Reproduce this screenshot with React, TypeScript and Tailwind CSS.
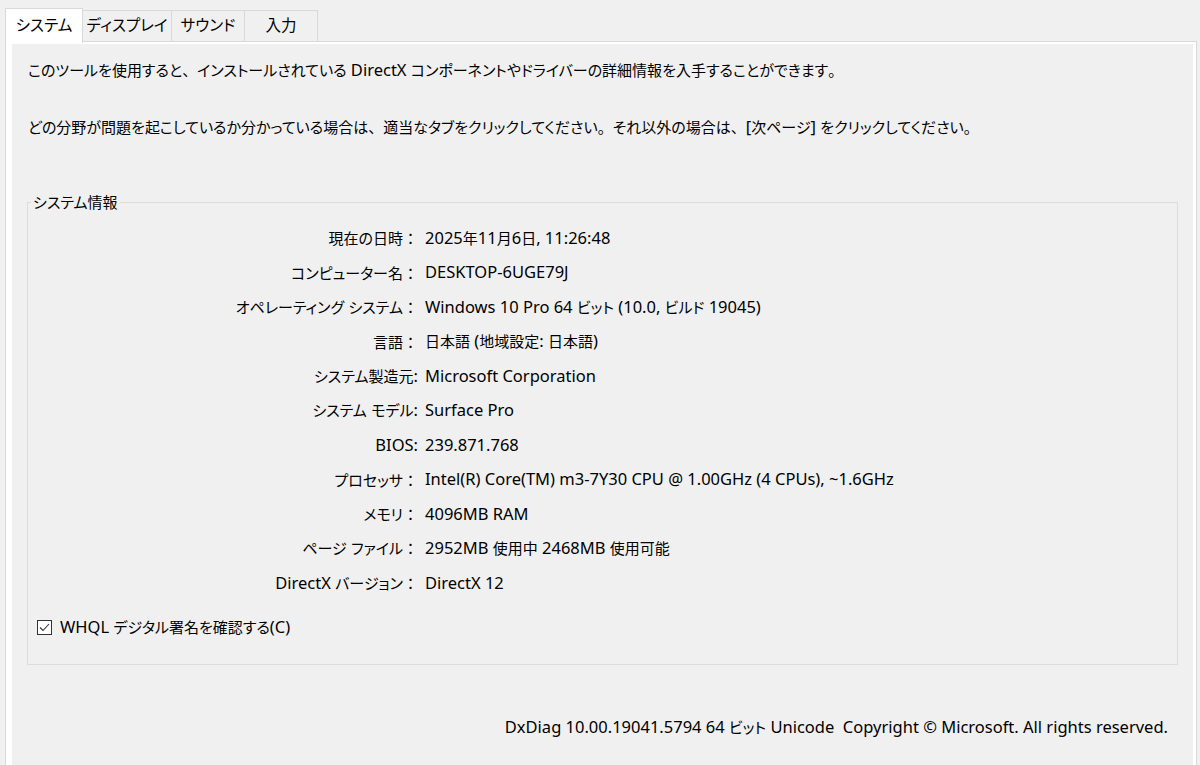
import React from "react";

const rows: [string, string][] = [
  ["現在の日時：", "2025年11月6日, 11:26:48"],
  ["コンピューター名：", "DESKTOP-6UGE79J"],
  ["オペレーティング システム：", "Windows 10 Pro 64 ビット (10.0, ビルド 19045)"],
  ["言語：", "日本語 (地域設定: 日本語)"],
  ["システム製造元:", "Microsoft Corporation"],
  ["システム モデル:", "Surface Pro"],
  ["BIOS:", "239.871.768"],
  ["プロセッサ：", "Intel(R) Core(TM) m3-7Y30 CPU @ 1.00GHz (4 CPUs), ~1.6GHz"],
  ["メモリ：", "4096MB RAM"],
  ["ページ ファイル：", "2952MB 使用中 2468MB 使用可能"],
  ["DirectX バージョン：", "DirectX 12"],
];

const tabs = ["ディスプレイ", "サウンド", "入力"];
const tabWidths = ["w-[89px]", "w-[73px]", "w-[73px]"];

// Latin runs are set a little larger than the kana, full-width punctuation keeps its box
function T({ s }: { s: string }) {
  const parts = s.split(/([\x20-\x7E©]+|[、。：])/).filter(Boolean);
  return (
    <>
      {parts.map((p, i) =>
        /^[\x20-\x7E©]+$/.test(p) ? (
          <span key={i} className="text-[16.5px]">
            {p}
          </span>
        ) : /^[、。：]$/.test(p) ? (
          <span key={i} className="[font-feature-settings:normal]">
            {p}
          </span>
        ) : (
          <React.Fragment key={i}>{p}</React.Fragment>
        ),
      )}
    </>
  );
}

export default function App() {
  return (
    <div className="w-[1200px] h-[765px] overflow-hidden bg-[#f0f0f0] text-[15px] text-black font-['Noto_Sans','Noto_Sans_CJK_JP',sans-serif] [font-feature-settings:'palt']">
      {/* tab strip */}
      <div className="flex items-end pl-[5px] h-[42px] whitespace-nowrap text-[15.5px]">
        <div className="relative z-10 w-[78px] h-[35px] -mb-px bg-white border border-b-0 border-[#d9d9d9] flex items-center justify-center">
          システム
        </div>
        {tabs.map((t, i) => (
          <div
            key={t}
            className={`${tabWidths[i]} h-[31px] mb-px border-t border-r border-[#d9d9d9] flex items-center justify-center`}
          >
            {t}
          </div>
        ))}
      </div>

      {/* panel */}
      <div className="ml-[5px] w-[1192px] h-[730px] -mt-px border border-[#d9d9d9] bg-white pl-[6px] pr-[3px] pt-[2px]">
        <div className="h-full bg-[#f0f0f0] pt-[15px]">
          <p className="pl-[16px] leading-[22px] whitespace-nowrap">
            <T s="このツールを使用すると、インストールされている DirectX コンポーネントやドライバーの詳細情報を入手することができます。" />
          </p>
          <p className="pl-[16px] mt-[35px] leading-[22px] whitespace-nowrap">
            <T s="どの分野が問題を起こしているか分かっている場合は、適当なタブをクリックしてください。それ以外の場合は、[次ページ] をクリックしてください。" />
          </p>

          <fieldset className="ml-[15px] mt-[53px] w-[1151px] border border-[#dcdcdc] pb-[26px] pl-[9px]">
            <legend className="ml-[-6px] px-[2px] leading-[22px]">システム情報</legend>
            <div className="mt-[8px] grid grid-cols-[381px_1fr] gap-x-[7px]">
              {rows.map(([k, v]) => (
                <React.Fragment key={k}>
                  <div className="h-[34.5px] flex items-center justify-end whitespace-pre">
                    <span>
                      <T s={k} />
                    </span>
                  </div>
                  <div className="h-[34.5px] flex items-center whitespace-pre">
                    <span>
                      <T s={v} />
                    </span>
                  </div>
                </React.Fragment>
              ))}
            </div>
            <div className="mt-[15.5px] h-[22px] flex items-center gap-[8px]">
              <svg width="15" height="15" viewBox="0 0 15 15" className="shrink-0">
                <rect x="0.5" y="0.5" width="14" height="14" fill="#ffffff" stroke="#333333" />
                <polyline points="3,7.5 6,10.5 12,4" fill="none" stroke="#333333" strokeWidth="1.1" />
              </svg>
              <span className="whitespace-pre">
                <T s="WHQL デジタル署名を確認する(C)" />
              </span>
            </div>
          </fieldset>

          <div className="mt-[51px] pr-[25px] text-right leading-[22px] whitespace-pre">
            <T s="DxDiag 10.00.19041.5794 64 ビット Unicode  Copyright © Microsoft. All rights reserved." />
          </div>
        </div>
      </div>
    </div>
  );
}
